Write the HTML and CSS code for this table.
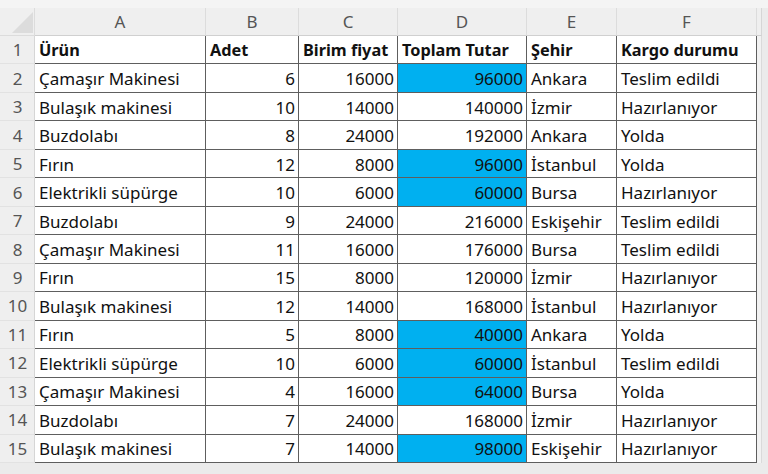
FILE: index.html
```html
<!DOCTYPE html>
<html lang="tr">
<head>
<meta charset="utf-8">
<title>Sipariş tablosu</title>
<link rel="stylesheet" href="styles.css">
</head>
<body>
<div class="topstrip"></div>
<div class="sheet">
  <div class="corner"><span class="tri"></span></div>
  <div class="colhead">A</div>
  <div class="colhead">B</div>
  <div class="colhead">C</div>
  <div class="colhead">D</div>
  <div class="colhead">E</div>
  <div class="colhead">F</div>
  <div class="colhead edge"></div>

  <div class="rowhead">1</div>
  <div class="cell b">Ürün</div><div class="cell b">Adet</div><div class="cell b">Birim fiyat</div><div class="cell b">Toplam Tutar</div><div class="cell b">Şehir</div><div class="cell b">Kargo durumu</div><div class="pad"></div>

  <div class="rowhead">2</div>
  <div class="cell">Çamaşır Makinesi</div><div class="cell n">6</div><div class="cell n">16000</div><div class="cell n hl">96000</div><div class="cell">Ankara</div><div class="cell">Teslim edildi</div><div class="pad"></div>

  <div class="rowhead">3</div>
  <div class="cell">Bulaşık makinesi</div><div class="cell n">10</div><div class="cell n">14000</div><div class="cell n">140000</div><div class="cell">İzmir</div><div class="cell">Hazırlanıyor</div><div class="pad"></div>

  <div class="rowhead">4</div>
  <div class="cell">Buzdolabı</div><div class="cell n">8</div><div class="cell n">24000</div><div class="cell n">192000</div><div class="cell">Ankara</div><div class="cell">Yolda</div><div class="pad"></div>

  <div class="rowhead">5</div>
  <div class="cell">Fırın</div><div class="cell n">12</div><div class="cell n">8000</div><div class="cell n hl">96000</div><div class="cell">İstanbul</div><div class="cell">Yolda</div><div class="pad"></div>

  <div class="rowhead">6</div>
  <div class="cell">Elektrikli süpürge</div><div class="cell n">10</div><div class="cell n">6000</div><div class="cell n hl">60000</div><div class="cell">Bursa</div><div class="cell">Hazırlanıyor</div><div class="pad"></div>

  <div class="rowhead">7</div>
  <div class="cell">Buzdolabı</div><div class="cell n">9</div><div class="cell n">24000</div><div class="cell n">216000</div><div class="cell">Eskişehir</div><div class="cell">Teslim edildi</div><div class="pad"></div>

  <div class="rowhead">8</div>
  <div class="cell">Çamaşır Makinesi</div><div class="cell n">11</div><div class="cell n">16000</div><div class="cell n">176000</div><div class="cell">Bursa</div><div class="cell">Teslim edildi</div><div class="pad"></div>

  <div class="rowhead">9</div>
  <div class="cell">Fırın</div><div class="cell n">15</div><div class="cell n">8000</div><div class="cell n">120000</div><div class="cell">İzmir</div><div class="cell">Hazırlanıyor</div><div class="pad"></div>

  <div class="rowhead">10</div>
  <div class="cell">Bulaşık makinesi</div><div class="cell n">12</div><div class="cell n">14000</div><div class="cell n">168000</div><div class="cell">İstanbul</div><div class="cell">Hazırlanıyor</div><div class="pad"></div>

  <div class="rowhead">11</div>
  <div class="cell">Fırın</div><div class="cell n">5</div><div class="cell n">8000</div><div class="cell n hl">40000</div><div class="cell">Ankara</div><div class="cell">Yolda</div><div class="pad"></div>

  <div class="rowhead">12</div>
  <div class="cell">Elektrikli süpürge</div><div class="cell n">10</div><div class="cell n">6000</div><div class="cell n hl">60000</div><div class="cell">İstanbul</div><div class="cell">Teslim edildi</div><div class="pad"></div>

  <div class="rowhead">13</div>
  <div class="cell">Çamaşır Makinesi</div><div class="cell n">4</div><div class="cell n">16000</div><div class="cell n hl">64000</div><div class="cell">Bursa</div><div class="cell">Yolda</div><div class="pad"></div>

  <div class="rowhead">14</div>
  <div class="cell">Buzdolabı</div><div class="cell n">7</div><div class="cell n">24000</div><div class="cell n">168000</div><div class="cell">İzmir</div><div class="cell">Hazırlanıyor</div><div class="pad"></div>

  <div class="rowhead">15</div>
  <div class="cell">Bulaşık makinesi</div><div class="cell n">7</div><div class="cell n">14000</div><div class="cell n hl">98000</div><div class="cell">Eskişehir</div><div class="cell">Hazırlanıyor</div><div class="pad"></div>
</div>
</body>
</html>
```

FILE: styles.css
```css
* { box-sizing: border-box; }

html, body {
  margin: 0;
  padding: 0;
  background: #ebebeb;
  width: 768px;
  height: 474px;
  overflow: hidden;
}

body {
  font-family: "Noto Sans", "Open Sans", sans-serif;
  font-size: 17px;
  color: #111;
}

.topstrip {
  height: 8px;
  background: #f4f4f4;
}

.sheet {
  display: grid;
  grid-template-columns: 35px 171px 93px 99px 129px 90px 140px 5px;
  grid-template-rows: 28px repeat(15, 28.47px);
}

.corner {
  background: #efefef;
  border-right: 1px solid #dcdcdc;
  border-bottom: 1px solid #dcdcdc;
  padding: 4px 2px 3px 12px;
}

.tri {
  display: block;
  width: 21px;
  height: 21px;
  background: #dcdcdc;
  clip-path: polygon(100% 0, 100% 100%, 0 100%);
}

.colhead {
  background: #efefef;
  color: #555;
  text-align: center;
  line-height: 27px;
  border-right: 1px solid #dcdcdc;
  border-bottom: 1px solid #d0d0d0;
}

.colhead.edge {
  border-right: 1px solid #d6d6d6;
}

.rowhead {
  background: #efefef;
  color: #555;
  text-align: center;
  border-right: 1px solid #d6d6d6;
  border-bottom: 1px solid #e2e2e2;
  display: flex;
  align-items: center;
  justify-content: center;
  padding-left: 1px;
}

.cell {
  background: #fff;
  border-right: 1px solid #5e5e5e;
  border-bottom: 1px solid #5e5e5e;
  display: flex;
  align-items: center;
  padding: 1px 3px 0 4px;
  white-space: nowrap;
  overflow: hidden;
}

.cell.b {
  font-weight: 700;
  font-size: 16.3px;
}

.cell.n {
  justify-content: flex-end;
  padding-right: 3px;
}

.cell.hl {
  background: #00b0f0;
}

.pad {
  background: #f2f2f2;
  border-right: 1px solid #dadada;
}
```
